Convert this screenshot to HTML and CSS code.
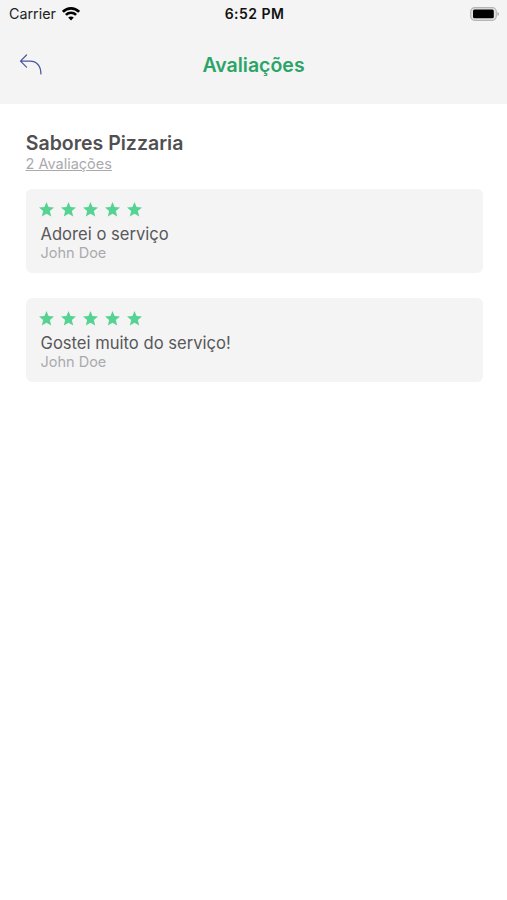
FILE: index.html
```html
<!DOCTYPE html>
<html lang="pt">
<head>
<meta charset="utf-8">
<title>Avaliações</title>
<link rel="stylesheet" href="styles.css">
</head>
<body>
<svg width="0" height="0" class="defs">
  <symbol id="star" viewBox="0 0 14 14"><path d="M7 0l1.900 4.700L14 5.100 10.100 8.400l1.300 5.200L7 10.900l-4.400 2.700 1.300-5.200L0 5.100l5.100-.4z"/></symbol>
</svg>
<header class="top">
  <div class="status">
    <div class="carrier"><span>Carrier</span>
      <svg class="wifi" width="18" height="14" viewBox="0 0 18 14" fill="none" stroke="#000" stroke-width="2.6"><path d="M.9 4.800C5.500.2 12.500.2 17.100 4.800"/><path d="M3.900 7.900c2.900-2.800 7.300-2.800 10.200 0"/><path d="M6.200 10.600L9 13.600l2.800-3c-1.600-1.500-4-1.500-5.600 0z" fill="#000" stroke="none"/></svg>
    </div>
    <span class="time">6:52 PM</span>
    <svg class="battery" width="30" height="14" viewBox="0 0 30 14"><rect x=".7" y=".7" width="25.600" height="12.600" rx="4" fill="#e2e2e2" stroke="#b5b5b5" stroke-width="1.200"/><rect x="3" y="2.500" width="20.800" height="8.800" rx="1.500"/><path d="M27.500 5c2 .7 2 3.300 0 4z" fill="#a5a5a5"/></svg>
  </div>
  <div class="nav">
    <svg class="back" width="24" height="22" viewBox="0 0 24 22" fill="none" stroke="#4a549f" stroke-width="1.200" stroke-linecap="round" stroke-linejoin="round"><path d="M7.500 1L1.500 7.200l6 6M1.500 7.200H11c6.500 0 11 4.500 10.900 12.800"/></svg>
    <h1>Avaliações</h1>
  </div>
</header>
<main>
  <h2>Sabores Pizzaria</h2>
  <p class="count">2 Avaliações</p>
  <article class="card">
    <div class="stars"><svg><use href="#star"/></svg><svg><use href="#star"/></svg><svg><use href="#star"/></svg><svg><use href="#star"/></svg><svg><use href="#star"/></svg></div>
    <p class="comment">Adorei o serviço</p>
    <p class="author">John Doe</p>
  </article>
  <article class="card">
    <div class="stars"><svg><use href="#star"/></svg><svg><use href="#star"/></svg><svg><use href="#star"/></svg><svg><use href="#star"/></svg><svg><use href="#star"/></svg></div>
    <p class="comment">Gostei muito do serviço!</p>
    <p class="author">John Doe</p>
  </article>
</main>
</body>
</html>
```
FILE: styles.css
```css
* { box-sizing: border-box; }
body { margin: 0; background: #fff; font-family: Inter, sans-serif; }
h1, h2, p { margin: 0; white-space: nowrap; }
svg { display: block; }
.defs { display: none; }
.top { height: 104px; background: #f4f4f4; }
.status { display: grid; grid-template-columns: 1fr auto 1fr; height: 27px; align-items: center; padding: 0 7px 0 9px; }
.carrier { display: flex; align-items: center; gap: 6px; font-size: 14.300px; line-height: 20px; color: #222; }
.time { font-size: 14px; font-weight: 600; letter-spacing: .45px; line-height: 20px; color: #111; }
.battery { justify-self: end; }
.nav { display: grid; grid-template-columns: 1fr auto 1fr; align-items: center; height: 76px; padding: 0 19px; }
h1 { font-size: 19.500px; font-weight: 600; line-height: 24px; color: #2ba567; }
main { padding: 30px 24.500px 30px 25.500px; }
h2 { font-size: 19.500px; font-weight: 600; line-height: 20px; color: #505052; padding-left: .3px; height: 25px; line-height: 19px; }
.count { height: 18px; margin: -4px 0 16px; font-size: 14.500px; line-height: 18px; color: #aaaaae; text-decoration: underline; }
.card { height: 84px; margin-bottom: 25px; padding: 13px 15px; border-radius: 6px; background: #f4f4f4; }
.stars { display: flex; gap: 7px; margin-left: -2px; }
.stars svg { width: 15px; height: 15px; fill: #56d392; }
.comment { margin-top: 6px; font-size: 16.600px; line-height: 22px; color: #58585b; }
.author { font-size: 14.500px; line-height: 16px; color: #aaaaae; }
```
